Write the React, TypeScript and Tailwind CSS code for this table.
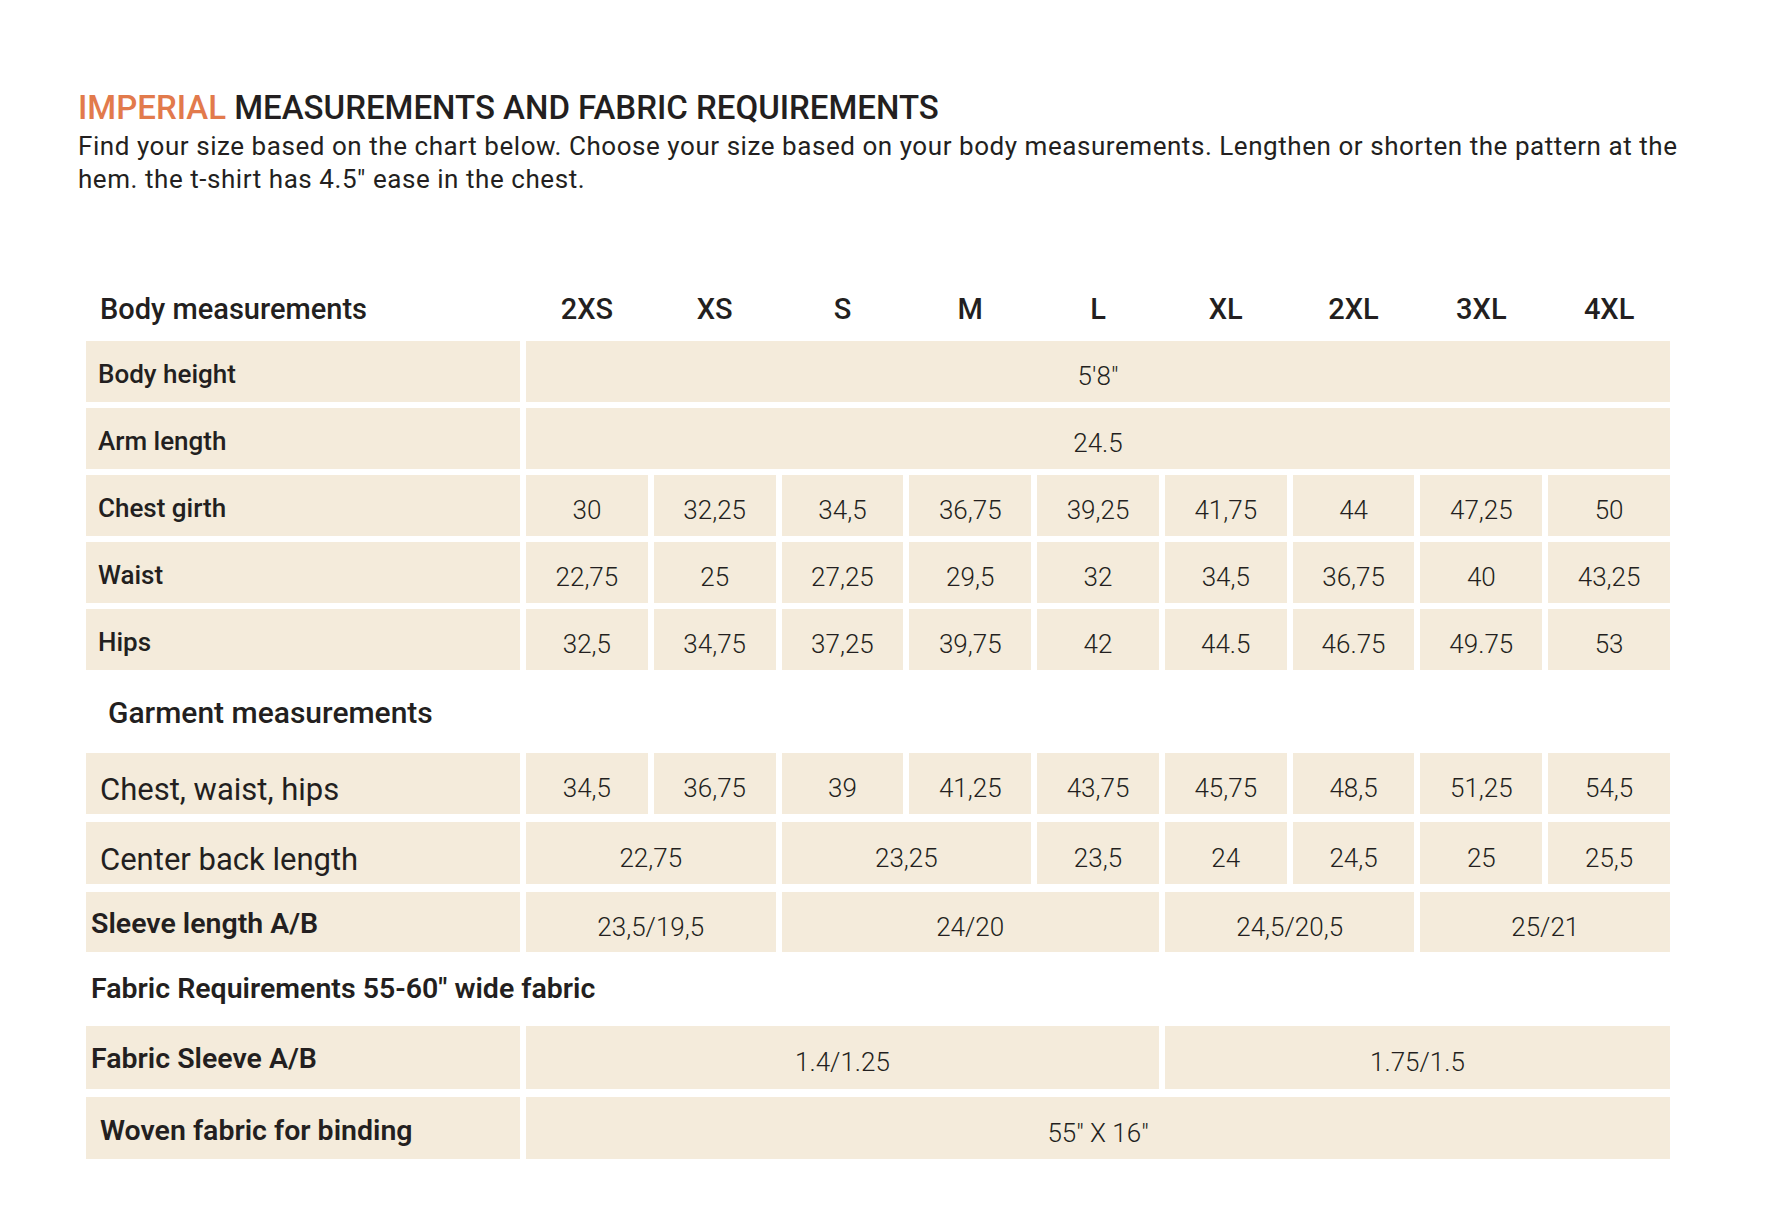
const SIZES = ['2XS', 'XS', 'S', 'M', 'L', 'XL', '2XL', '3XL', '4XL'];

const SPAN: Record<number, string> = {
  1: 'col-span-1',
  2: 'col-span-2',
  3: 'col-span-3',
  4: 'col-span-4',
  5: 'col-span-5',
  9: 'col-span-9',
};

type Cell = { v: string; span: number };
type Row = { label: string; labelClass: string; h: string; cells: Cell[] };

const each = (vals: string[]): Cell[] => vals.map(v => ({ v, span: 1 }));

// label styles per row group
const BODY_LABEL = 'pl-[12px] pt-[5px] text-[26px] font-medium';
const GARMENT_LABEL = 'pl-[14px] pt-[14px] text-[31px] font-normal';
const BOLD_LABEL = 'pl-[5px] pt-[4px] text-[28.5px] font-semibold';

const BODY: Row[] = [
  { label: 'Body height', labelClass: BODY_LABEL, h: 'h-[61px]', cells: [{ v: `5'8"`, span: 9 }] },
  { label: 'Arm length', labelClass: BODY_LABEL, h: 'h-[61px]', cells: [{ v: '24.5', span: 9 }] },
  { label: 'Chest girth', labelClass: BODY_LABEL, h: 'h-[61px]', cells: each(['30', '32,25', '34,5', '36,75', '39,25', '41,75', '44', '47,25', '50']) },
  { label: 'Waist', labelClass: BODY_LABEL, h: 'h-[61px]', cells: each(['22,75', '25', '27,25', '29,5', '32', '34,5', '36,75', '40', '43,25']) },
  { label: 'Hips', labelClass: BODY_LABEL, h: 'h-[61px]', cells: each(['32,5', '34,75', '37,25', '39,75', '42', '44.5', '46.75', '49.75', '53']) },
];

const GARMENT: Row[] = [
  { label: 'Chest, waist, hips', labelClass: GARMENT_LABEL, h: 'h-[61px]', cells: each(['34,5', '36,75', '39', '41,25', '43,75', '45,75', '48,5', '51,25', '54,5']) },
  {
    label: 'Center back length', labelClass: GARMENT_LABEL, h: 'h-[62px]',
    cells: [{ v: '22,75', span: 2 }, { v: '23,25', span: 2 }, { v: '23,5', span: 1 }, { v: '24', span: 1 }, { v: '24,5', span: 1 }, { v: '25', span: 1 }, { v: '25,5', span: 1 }],
  },
  {
    label: 'Sleeve length A/B', labelClass: BOLD_LABEL, h: 'h-[60px]',
    cells: [{ v: '23,5/19,5', span: 2 }, { v: '24/20', span: 3 }, { v: '24,5/20,5', span: 2 }, { v: '25/21', span: 2 }],
  },
];

const FABRIC: Row[] = [
  { label: 'Fabric Sleeve A/B', labelClass: BOLD_LABEL, h: 'h-[63px]', cells: [{ v: '1.4/1.25', span: 5 }, { v: '1.75/1.5', span: 4 }] },
  { label: 'Woven fabric for binding', labelClass: 'pl-[14px] pt-[6px] text-[28.5px] font-semibold', h: 'h-[62px]', cells: [{ v: '55″ X 16″', span: 9 }] },
];

function TableRow({ row }: { row: Row }) {
  return (
    <div className="grid grid-cols-[434px_repeat(9,minmax(0,1fr))] gap-x-[6px]">
      <div className={`flex items-center bg-[#f4ebdb] text-[#231f20] ${row.h} ${row.labelClass}`}>{row.label}</div>
      {row.cells.map((c, i) => (
        <div key={i} className={`flex items-center justify-center bg-[#f4ebdb] pt-[10px] text-[26px] font-light text-[#231f20] ${row.h} ${SPAN[c.span]}`}>
          {c.v}
        </div>
      ))}
    </div>
  );
}

export default function App() {
  return (
    <div className="min-h-screen bg-white pl-[78px] pt-[91px] font-['Roboto','Liberation_Sans',sans-serif] text-[#231f20]">
      <h1 className="text-[33px] font-medium leading-[33px]">
        <span className="text-[#e27a4c]">IMPERIAL</span> MEASUREMENTS AND FABRIC REQUIREMENTS
      </h1>
      <p className="mt-[6px] whitespace-nowrap text-[26px] leading-[33px] tracking-[0.55px]">
        Find your size based on the chart below. Choose your size based on your body measurements. Lengthen or shorten the pattern at the
        <br />
        hem. the t-shirt has 4.5″ ease in the chest.
      </p>

      <div className="ml-[8px] mt-[89px] w-[1584px]">
        <div className="mb-[6px] grid h-[50px] grid-cols-[434px_repeat(9,minmax(0,1fr))] gap-x-[6px] text-[29px] font-medium">
          <div className="flex items-center pl-[14px]">Body measurements</div>
          {SIZES.map(s => (
            <div key={s} className="flex items-center justify-center">{s}</div>
          ))}
        </div>

        <div className="flex flex-col gap-[6px]">
          {BODY.map(r => <TableRow key={r.label} row={r} />)}
        </div>

        <div className="flex h-[83px] items-center pl-[22px] pt-[2px] text-[30px] font-medium">Garment measurements</div>

        <div className="flex flex-col gap-[8px]">
          {GARMENT.map(r => <TableRow key={r.label} row={r} />)}
        </div>

        <div className="flex h-[74px] items-center pl-[5px] text-[28.5px] font-semibold">Fabric Requirements 55-60″ wide fabric</div>

        <div className="flex flex-col gap-[8px]">
          {FABRIC.map(r => <TableRow key={r.label} row={r} />)}
        </div>
      </div>
    </div>
  );
}
